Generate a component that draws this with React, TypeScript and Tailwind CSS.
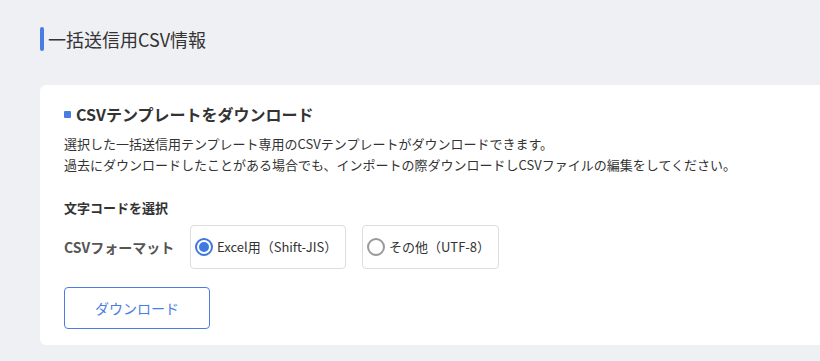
export default function App() {
  return (
    <div
      className="min-h-[361px] w-[820px] overflow-hidden bg-[#eff0f4] text-[#333]"
      style={{ fontFamily: '"Noto Sans CJK JP", "Noto Sans", sans-serif' }}
    >
      <div className="pl-10 pt-[27px]">
        <div className="flex h-[24px] items-center">
          <span className="h-[24px] w-[4px] rounded-sm bg-[#4a7de2]" />
          <h1 className="ml-[4px] text-[18px] leading-[24px] text-[#333]">一括送信用CSV情報</h1>
        </div>

        <div className="mt-[34px] w-[800px] rounded-l-md bg-white pb-[16px] pl-6 pt-[18px]">
          <div className="flex h-[22px] items-center">
            <span className="h-[7px] w-[7px] rounded-[1px] bg-[#4a7de2]" />
            <h2 className="ml-[5px] text-[16px] font-bold leading-[22px]">CSVテンプレートをダウンロード</h2>
          </div>
          <p className="mt-[8px] text-[13px] leading-[21px] text-[#333]">
            選択した一括送信用テンプレート専用のCSVテンプレートがダウンロードできます。
            <br />
            過去にダウンロードしたことがある場合でも、インポートの際ダウンロードしCSVファイルの編集をしてください。
          </p>

          <p className="mt-[23px] text-[13px] font-bold leading-[20px]">文字コードを選択</p>

          <div className="mt-[7px] flex items-center">
            <span className="w-[126px] text-[14px] font-bold text-[#555]">CSVフォーマット</span>
            <label className="flex h-[44px] w-[156px] items-center rounded-[4px] border border-[#dcdde1] pl-[4px] text-[13px]">
              <span className="flex h-[18px] w-[18px] items-center justify-center rounded-full border-2 border-[#3f78e0]">
                <span className="h-[10px] w-[10px] rounded-full bg-[#3f78e0]" />
              </span>
              <span className="ml-[4px]">Excel用（Shift-JIS）</span>
            </label>
            <label className="ml-[16px] flex h-[44px] w-[137px] items-center rounded-[4px] border border-[#dcdde1] pl-[4px] text-[13px]">
              <span className="h-[18px] w-[18px] rounded-full border-2 border-[#999]" />
              <span className="ml-[4px]">その他（UTF-8）</span>
            </label>
          </div>

          <button className="mt-[18px] h-[42px] w-[146px] rounded-[4px] border border-[#4a7de2] text-[14px] text-[#4a7de2]">
            ダウンロード
          </button>
        </div>
      </div>
    </div>
  );
}
